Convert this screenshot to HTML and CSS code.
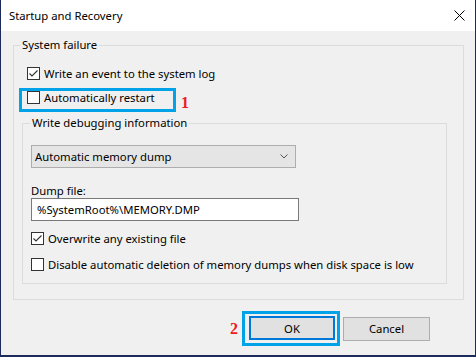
FILE: index.html
```html
<!DOCTYPE html>
<html>

<head>
    <meta content="width=device-width, initial-scale=1" name="viewport" />
    <link rel="stylesheet" href="styles.css">
</head>

<body>
    <div class="window">
        <div class="titlebar">
            <span class="title">Startup and Recovery</span>
            <svg class="close" width="11" height="11" viewBox="0 0 11 11">
                <path d="M0.5 0.5 L10.5 10.5 M10.5 0.5 L0.5 10.5" stroke="#000" stroke-width="1" fill="none" />
            </svg>
        </div>
        <div class="content">
            <fieldset class="group outer">
                <legend>System failure</legend>
                <div class="check-row first">
                    <span class="box">
                        <svg width="11" height="11" viewBox="0 0 11 11">
                            <path d="M1.5 5.5 L4 8 L9.5 2.5" stroke="#333" stroke-width="1.1" fill="none" />
                        </svg>
                    </span>
                    <span>Write an event to the system log</span>
                </div>
                <div class="mark-row">
                    <div class="highlight">
                        <div class="check-row">
                            <span class="box"></span>
                            <span>Automatically restart</span>
                        </div>
                    </div>
                    <span class="marker one">1</span>
                </div>
                <fieldset class="group inner">
                    <legend>Write debugging information</legend>
                    <div class="select">
                        <span>Automatic memory dump</span>
                        <svg width="8" height="5" viewBox="0 0 8 5">
                            <path d="M0.5 0.5 L4 4 L7.5 0.5" stroke="#555" stroke-width="1" fill="none" />
                        </svg>
                    </div>
                    <div class="field-label">Dump file:</div>
                    <div class="textbox">%SystemRoot%\MEMORY.DMP</div>
                    <div class="check-row overwrite">
                        <span class="box">
                            <svg width="11" height="11" viewBox="0 0 11 11">
                                <path d="M1.5 5.5 L4 8 L9.5 2.5" stroke="#333" stroke-width="1.1" fill="none" />
                            </svg>
                        </span>
                        <span>Overwrite any existing file</span>
                    </div>
                    <div class="check-row disable">
                        <span class="box"></span>
                        <span>Disable automatic deletion of memory dumps when disk space is low</span>
                    </div>
                </fieldset>
            </fieldset>
            <div class="buttons">
                <span class="marker two">2</span>
                <div class="focus-ring">
                    <div class="btn default">OK</div>
                </div>
                <div class="btn">Cancel</div>
            </div>
        </div>
    </div>
</body>

</html>
```

FILE: styles.css
```css
html,
body {
    margin: 0;
    height: 100%;
}

body {
    font-family: "Noto Sans", sans-serif;
    font-size: 11.3px;
    color: #000;
    background: #1c2b5c;
}

.window {
    width: 476px;
    height: 357px;
    box-sizing: border-box;
    border-left: 1px solid #1c2b5c;
    border-right: 1px solid #1c2b5c;
    border-bottom: 2px solid #1c2b5c;
    display: flex;
    flex-direction: column;
}

.titlebar {
    height: 31px;
    background: #fff;
    display: flex;
    align-items: center;
    justify-content: space-between;
    padding: 0 10px 0 8px;
}

.title {
    line-height: 16px;
}

.content {
    flex: 1;
    background: #f0f0f0;
    padding-top: 6px;
}

/* group boxes */
.group {
    margin: 0;
    border: 1px solid #dcdcdc;
    box-sizing: border-box;
    min-width: 0;
}

.group legend {
    padding: 0 2px;
    line-height: 16px;
}

.outer {
    width: 451px;
    margin-left: 12px;
    padding: 0 0 15px 6px;
}

.inner {
    width: 425px;
    margin: 3px 0 0 2px;
    padding: 0 0 12px 7px;
}

.check-row {
    display: flex;
    align-items: center;
    height: 13px;
    line-height: 13px;
    white-space: nowrap;
}

.check-row .box {
    width: 13px;
    height: 13px;
    box-sizing: border-box;
    border: 1px solid #333;
    background: #fff;
    margin-right: 4px;
    display: flex;
    align-items: center;
    justify-content: center;
    flex-shrink: 0;
}

.first {
    margin: 14px 0 0 7px;
}

.mark-row {
    display: flex;
    align-items: flex-start;
    margin: 8px 0 0 -1px;
}

.highlight {
    width: 157px;
    height: 24px;
    box-sizing: border-box;
    border: 3px solid #00a2e8;
    padding-left: 5px;
}

.marker {
    font-family: "Liberation Serif", serif;
    font-weight: bold;
    color: #ed1c24;
    font-size: 16px;
    line-height: 16px;
}

.one {
    margin: 7px 0 0 5px;
}

.select {
    width: 265px;
    height: 23px;
    box-sizing: border-box;
    margin: 14px 0 0 1px;
    border: 1px solid #adadad;
    background: #e5e5e5;
    display: flex;
    align-items: center;
    justify-content: space-between;
    padding: 0 7px 0 3px;
}

.field-label {
    margin: 16px 0 0 1px;
    line-height: 14px;
}

.textbox {
    width: 268px;
    height: 23px;
    box-sizing: border-box;
    margin-left: 1px;
    border: 1px solid #7a7a7a;
    background: #fff;
    padding-left: 5px;
    line-height: 21px;
}

.overwrite {
    margin: 11px 0 0 1px;
}

.disable {
    margin: 13px 0 0 1px;
}

/* dialog buttons */
.buttons {
    display: flex;
    align-items: center;
    justify-content: flex-end;
    margin: 11px 45px 0 0;
}

.two {
    margin-right: 4px;
}

.focus-ring {
    border: 3px solid #00a2e8;
    padding: 2px 2px 3px 4px;
    margin-right: 3px;
}

.btn {
    width: 87px;
    height: 24px;
    box-sizing: border-box;
    border: 1px solid #adadad;
    background: #e1e1e1;
    display: flex;
    align-items: center;
    justify-content: center;
}

.btn.default {
    width: 86px;
    border: 2px solid #0078d7;
}
```
